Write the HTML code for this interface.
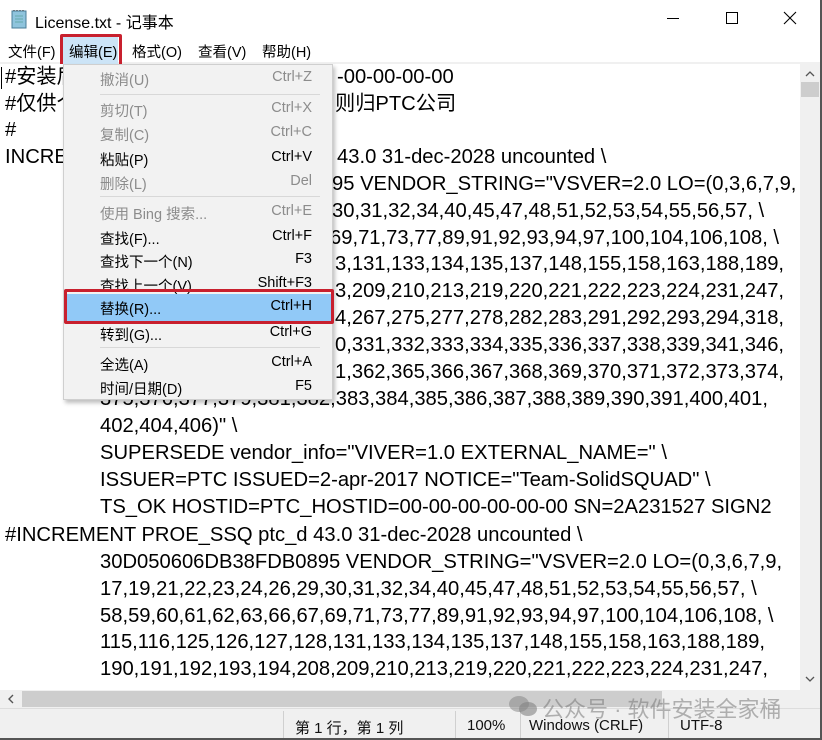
<!DOCTYPE html>
<html><head><meta charset="utf-8">
<style>
*{margin:0;padding:0;box-sizing:border-box}
body{width:822px;height:740px;overflow:hidden;background:#fff;font-family:"Liberation Sans","Noto Sans CJK SC",sans-serif;position:relative}
.abs{position:absolute;white-space:pre}
#title{position:absolute;left:0;top:0;width:822px;height:36px;background:#fff}
#menubar{position:absolute;left:0;top:36px;width:822px;height:28px;background:#fff;border-bottom:2px solid #f0f0f0}
.mb{position:absolute;top:41px;font-size:14.5px;color:#000}
#editor{position:absolute;left:0;top:64px;width:800px;height:626px;overflow:hidden;background:#fff}
.ln{position:absolute;white-space:pre;font-size:20.2px;color:#000;line-height:26px}
#vs{position:absolute;left:800px;top:64px;width:20px;height:626px;background:#f0f0f0}
#hs{position:absolute;left:0;top:690px;width:800px;height:18px;background:#f0f0f0}
#status{position:absolute;left:0;top:708px;width:822px;height:32px;background:#f0f0f0;border-top:1px solid #ddd}
.sb{position:absolute;top:8px;font-size:15px;color:#111}
.sep{position:absolute;top:2px;width:1px;height:28px;background:#d0d0d0}
#menu{position:absolute;left:63px;top:64px;width:270px;height:336px;background:#f2f2f2;border:1px solid #cfcfcf;box-shadow:2px 3px 4px rgba(0,0,0,.25)}
.mi{position:absolute;left:0;width:268px;height:24px;font-size:14.5px}
.mi .l{position:absolute;left:36px;top:3px}
.mi .r{position:absolute;right:20px;top:3px}
.dis{color:#8c8c8c}
.msep{position:absolute;left:36px;width:220px;height:1px;background:#d8d8d8}
</style></head><body>
<div id="title">
  <svg class="abs" style="left:10px;top:9px" width="18" height="20" viewBox="0 0 18 20"><rect x="2" y="2" width="14" height="17" fill="#8fc4dd" stroke="#4a7c98"/><path d="M4 2v-1M7 2v-1M10 2v-1M13 2v-1" stroke="#333"/><path d="M5 7h8M5 10h8M5 13h8" stroke="#6aa" /></svg>
  <div class="abs" style="left:35px;top:9px;font-size:16px;color:#000">License.txt - 记事本</div>
  <div class="abs" style="left:667px;top:18px;width:12px;height:1px;background:#000"></div>
  <div class="abs" style="left:726px;top:12px;width:12px;height:12px;border:1px solid #000"></div>
  <svg class="abs" style="left:783px;top:11px" width="14" height="14"><path d="M1 1L13 13M13 1L1 13" stroke="#000" stroke-width="1.1"/></svg>
</div>
<div id="menubar"></div>
<div class="mb" style="left:8px">文件(F)</div>
<div class="abs" style="left:63px;top:37px;width:55px;height:28px;background:#cce4f7"></div>
<div class="mb" style="left:69px">编辑(E)</div>
<div class="mb" style="left:132px">格式(O)</div>
<div class="mb" style="left:198px">查看(V)</div>
<div class="mb" style="left:262px">帮助(H)</div>
<div class="abs" style="left:60px;top:34px;width:62px;height:34px;border:3px solid #c8202e;border-radius:2px"></div>

<div id="editor">
<div class="ln" style="left:5px;top:0px">#安装后修改</div>
<div class="ln" style="left:337px;top:0px">-00-00-00-00</div>
<div class="abs" style="left:1px;top:3px;width:1px;height:22px;background:#000"></div>
<div class="ln" style="left:5px;top:27px">#仅供个人学习</div>
<div class="ln" style="left:335px;top:27px">则归PTC公司</div>
<div class="ln" style="left:5px;top:53px">#</div>
<div class="ln" style="left:5px;top:80px">INCREMENT</div>
<div class="ln" style="left:337px;top:80px">43.0 31-dec-2028 uncounted \</div>
<div class="ln" style="left:332px;top:107px">95 VENDOR_STRING="VSVER=2.0 LO=(0,3,6,7,9,</div>
<div class="ln" style="left:332px;top:134px">30,31,32,34,40,45,47,48,51,52,53,54,55,56,57, \</div>
<div class="ln" style="left:330px;top:161px">69,71,73,77,89,91,92,93,94,97,100,104,106,108, \</div>
<div class="ln" style="left:335px;top:187px">3,131,133,134,135,137,148,155,158,163,188,189,</div>
<div class="ln" style="left:335px;top:214px">3,209,210,213,219,220,221,222,223,224,231,247,</div>
<div class="ln" style="left:335px;top:241px">4,267,275,277,278,282,283,291,292,293,294,318,</div>
<div class="ln" style="left:335px;top:268px">0,331,332,333,334,335,336,337,338,339,341,346,</div>
<div class="ln" style="left:335px;top:295px">1,362,365,366,367,368,369,370,371,372,373,374,</div>
<div class="ln" style="left:100px;top:322px">375,376,377,379,381,382,383,384,385,386,387,388,389,390,391,400,401,</div>
<div class="ln" style="left:100px;top:349px">402,404,406)" \</div>
<div class="ln" style="left:100px;top:376px">SUPERSEDE vendor_info="VIVER=1.0 EXTERNAL_NAME=" \</div>
<div class="ln" style="left:100px;top:403px">ISSUER=PTC ISSUED=2-apr-2017 NOTICE="Team-SolidSQUAD" \</div>
<div class="ln" style="left:100px;top:430px">TS_OK HOSTID=PTC_HOSTID=00-00-00-00-00-00 SN=2A231527 SIGN2</div>
<div class="ln" style="left:5px;top:458px">#INCREMENT PROE_SSQ ptc_d 43.0 31-dec-2028 uncounted \</div>
<div class="ln" style="left:100px;top:485px">30D050606DB38FDB0895 VENDOR_STRING="VSVER=2.0 LO=(0,3,6,7,9,</div>
<div class="ln" style="left:100px;top:512px">17,19,21,22,23,24,26,29,30,31,32,34,40,45,47,48,51,52,53,54,55,56,57, \</div>
<div class="ln" style="left:100px;top:539px">58,59,60,61,62,63,66,67,69,71,73,77,89,91,92,93,94,97,100,104,106,108, \</div>
<div class="ln" style="left:100px;top:565px">115,116,125,126,127,128,131,133,134,135,137,148,155,158,163,188,189,</div>
<div class="ln" style="left:100px;top:592px">190,191,192,193,194,208,209,210,213,219,220,221,222,223,224,231,247,</div>
</div>

<div id="vs">
  <svg class="abs" style="left:5px;top:7px" width="10" height="6"><path d="M1 5L5 1L9 5" stroke="#555" fill="none" stroke-width="1.3"/></svg>
  <div class="abs" style="left:1px;top:18px;width:18px;height:15px;background:#cdcdcd"></div>
  <svg class="abs" style="left:5px;top:612px" width="10" height="6"><path d="M1 1L5 5L9 1" stroke="#555" fill="none" stroke-width="1.3"/></svg>
</div>
<div id="hs">
  <svg class="abs" style="left:7px;top:4px" width="7" height="10"><path d="M6 1L2 5L6 9" stroke="#555" fill="none" stroke-width="1.4"/></svg>
  <div class="abs" style="left:22px;top:1px;width:640px;height:16px;background:#cdcdcd"></div>
</div>
<div class="abs" style="left:800px;top:690px;width:20px;height:18px;background:#f0f0f0"></div>
<div id="status">
  <div class="sep" style="left:283px"></div>
  <div class="sb" style="left:295px">第 1 行，第 1 列</div>
  <div class="sep" style="left:455px"></div>
  <div class="sb" style="left:467px">100%</div>
  <div class="sep" style="left:520px"></div>
  <div class="sb" style="left:529px">Windows (CRLF)</div>
  <div class="sep" style="left:668px"></div>
  <div class="sb" style="left:680px">UTF-8</div>
</div>
<svg class="abs" style="left:508px;top:694px" width="30" height="24"><ellipse cx="11" cy="10" rx="10" ry="8" fill="rgba(130,130,130,.5)"/><ellipse cx="20" cy="15" rx="9" ry="7" fill="rgba(130,130,130,.6)"/></svg>
<div class="abs" style="left:542px;top:692px;font-size:22px;color:rgba(120,120,120,.55)">公众号 · 软件安装全家桶</div>
<div class="abs" style="left:820px;top:0;width:2px;height:740px;background:#555"></div>
<div class="abs" style="left:0;top:738px;width:822px;height:2px;background:#555"></div>

<div id="menu">
  <div class="mi dis" style="top:1px"><span class="l">撤消(U)</span><span class="r">Ctrl+Z</span></div>
  <div class="msep" style="top:29px"></div>
  <div class="mi dis" style="top:32px"><span class="l">剪切(T)</span><span class="r">Ctrl+X</span></div>
  <div class="mi dis" style="top:56px"><span class="l">复制(C)</span><span class="r">Ctrl+C</span></div>
  <div class="mi" style="top:81px"><span class="l">粘贴(P)</span><span class="r">Ctrl+V</span></div>
  <div class="mi dis" style="top:105px"><span class="l">删除(L)</span><span class="r">Del</span></div>
  <div class="msep" style="top:131px"></div>
  <div class="mi dis" style="top:135px"><span class="l">使用 Bing 搜索...</span><span class="r">Ctrl+E</span></div>
  <div class="mi" style="top:160px"><span class="l">查找(F)...</span><span class="r">Ctrl+F</span></div>
  <div class="mi" style="top:183px"><span class="l">查找下一个(N)</span><span class="r">F3</span></div>
  <div class="mi" style="top:207px"><span class="l">查找上一个(V)</span><span class="r">Shift+F3</span></div>
  <div class="mi" style="top:229px;height:27px;background:#91c9f7"><span class="l" style="top:4px">替换(R)...</span><span class="r" style="top:4px">Ctrl+H</span></div>
  <div class="mi" style="top:256px"><span class="l">转到(G)...</span><span class="r">Ctrl+G</span></div>
  <div class="msep" style="top:282px"></div>
  <div class="mi" style="top:286px"><span class="l">全选(A)</span><span class="r">Ctrl+A</span></div>
  <div class="mi" style="top:310px"><span class="l">时间/日期(D)</span><span class="r">F5</span></div>
</div>
<div class="abs" style="left:64px;top:289px;width:270px;height:35px;border:3px solid #c8202e;border-radius:2px"></div>
</body></html>
